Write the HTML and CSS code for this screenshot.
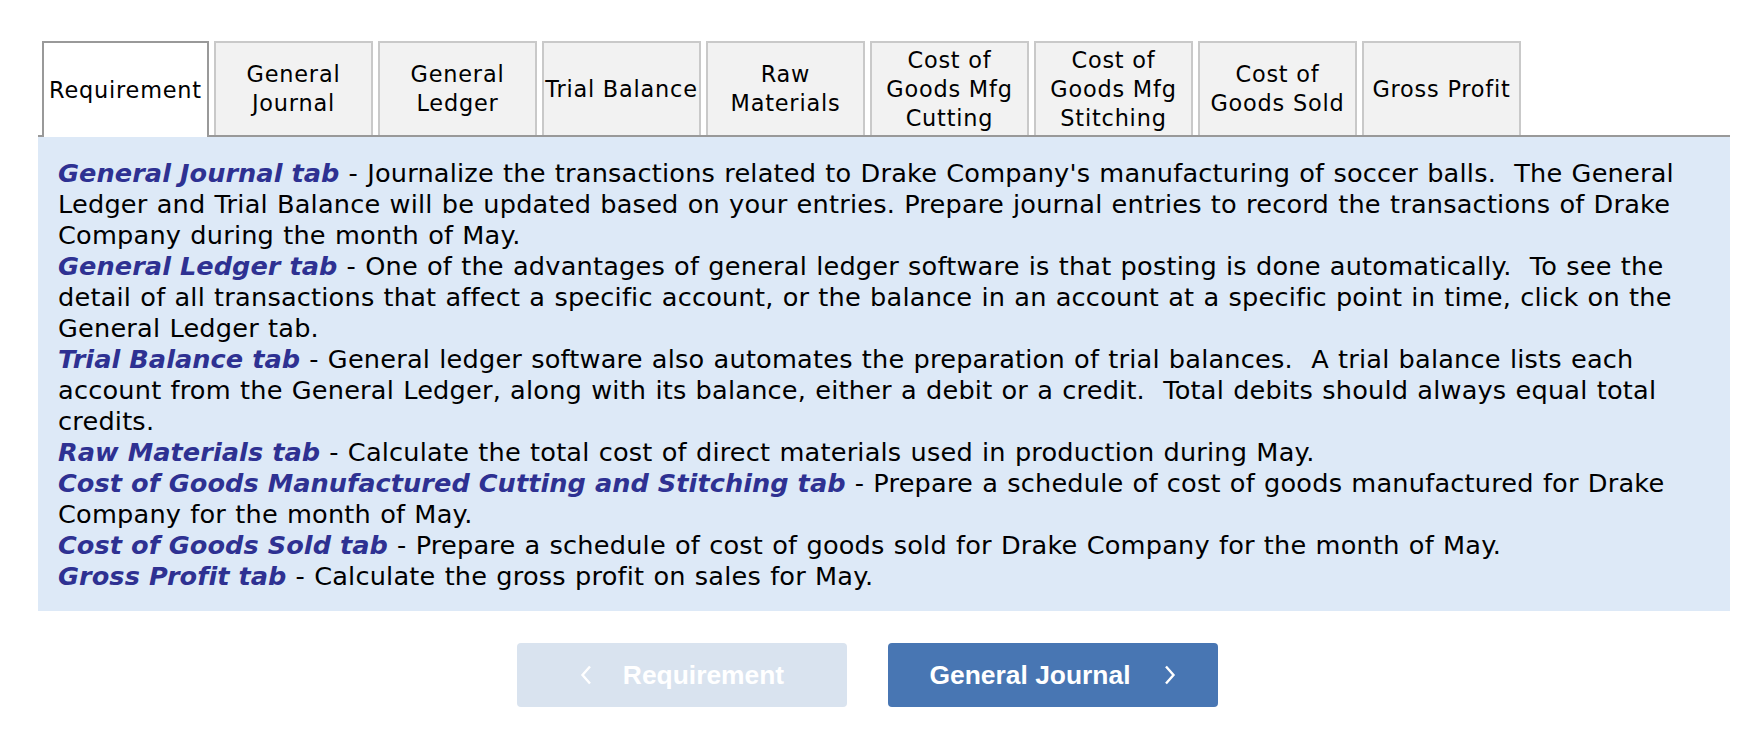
FILE: index.html
```html
<!DOCTYPE html>
<html>
<head>
<meta charset="utf-8">
<link rel="stylesheet" href="styles.css">
</head>
<body>
<div class="page">
  <div class="tabs">
    <div class="tab active">Requirement</div>
    <div class="tab">General<br>Journal</div>
    <div class="tab">General<br>Ledger</div>
    <div class="tab">Trial Balance</div>
    <div class="tab">Raw<br>Materials</div>
    <div class="tab">Cost of<br>Goods Mfg<br>Cutting</div>
    <div class="tab">Cost of<br>Goods Mfg<br>Stitching</div>
    <div class="tab">Cost of<br>Goods Sold</div>
    <div class="tab">Gross Profit</div>
  </div>
  <div class="panel">
    <div class="item"><span class="label">General Journal tab</span> - Journalize the transactions related to Drake Company's manufacturing of soccer balls.&nbsp; The General Ledger and Trial Balance will be updated based on your entries. Prepare journal entries to record the transactions of Drake Company during the month of May.</div>
    <div class="item"><span class="label">General Ledger tab</span> - One of the advantages of general ledger software is that posting is done automatically.&nbsp; To see the detail of all transactions that affect a specific account, or the balance in an account at a specific point in time, click on the General Ledger tab.</div>
    <div class="item"><span class="label">Trial Balance tab</span> - General ledger software also automates the preparation of trial balances.&nbsp; A trial balance lists each account from the General Ledger, along with its balance, either a debit or a credit.&nbsp; Total debits should always equal total credits.</div>
    <div class="item"><span class="label">Raw Materials tab</span> - Calculate the total cost of direct materials used in production during May.</div>
    <div class="item"><span class="label">Cost of Goods Manufactured Cutting and Stitching tab</span> - Prepare a schedule of cost of goods manufactured for Drake Company for the month of May.</div>
    <div class="item"><span class="label">Cost of Goods Sold tab</span> - Prepare a schedule of cost of goods sold for Drake Company for the month of May.</div>
    <div class="item"><span class="label">Gross Profit tab</span> - Calculate the gross profit on sales for May.</div>
  </div>
  <div class="nav">
    <div class="btn btn-prev">
      <svg class="chev" width="12" height="20" viewBox="0 0 12 20"><path d="M10 1.5 L2.5 10 L10 18.5" fill="none" stroke="#fff" stroke-width="2.4"/></svg>
      <span>Requirement</span>
    </div>
    <div class="btn btn-next">
      <span>General Journal</span>
      <svg class="chev" width="12" height="20" viewBox="0 0 12 20"><path d="M2 1.5 L9.5 10 L2 18.5" fill="none" stroke="#fff" stroke-width="2.4"/></svg>
    </div>
  </div>
</div>
</body>
</html>
```
FILE: styles.css
```css
html, body {
  margin: 0;
  padding: 0;
  background: #fff;
}

.page {
  padding: 41px 0 0 38px;
  width: 1692px;
}

.tabs {
  display: flex;
  gap: 5px;
  padding-left: 4px;
  height: 94px;
  align-items: stretch;
}

.tab {
  width: 159px;
  box-sizing: border-box;
  border: 2px solid #c9c9c9;
  border-bottom: none;
  background: #f2f2f2;
  display: flex;
  align-items: center;
  justify-content: center;
  text-align: center;
  font-family: "DejaVu Sans", Verdana, sans-serif;
  font-size: 22.4px;
  line-height: 29px;
  letter-spacing: 0.8px;
  color: #000;
  white-space: nowrap;
}

.tab.active {
  width: 167px;
  background: #fff;
  border-color: #999;
  margin-bottom: -2px;
  position: relative;
  z-index: 1;
}

.panel {
  border-top: 2px solid #999;
  background: #dde9f7;
  padding: 21px 20px 19px 20px;
  font-family: "DejaVu Sans", Verdana, sans-serif;
  font-size: 25.6px;
  line-height: 31px;
  letter-spacing: 0.2px;
  word-spacing: 0.8px;
  color: #000;
}

.label {
  color: #2e3192;
  font-weight: bold;
  font-style: italic;
  letter-spacing: 0.05px;
  word-spacing: 0;
}

.nav {
  display: flex;
  gap: 41px;
  padding-left: 479px;
  margin-top: 32px;
}

.btn {
  width: 330px;
  height: 64px;
  border-radius: 4px;
  display: flex;
  align-items: center;
  justify-content: center;
  font-family: "Liberation Sans", Arial, sans-serif;
  font-weight: bold;
  font-size: 26.4px;
  color: #fff;
}

.btn-prev {
  background: #d9e3ef;
  gap: 31px;
}

.btn-next {
  background: #4876b3;
  gap: 34px;
}

.chev {
  display: block;
}
```
